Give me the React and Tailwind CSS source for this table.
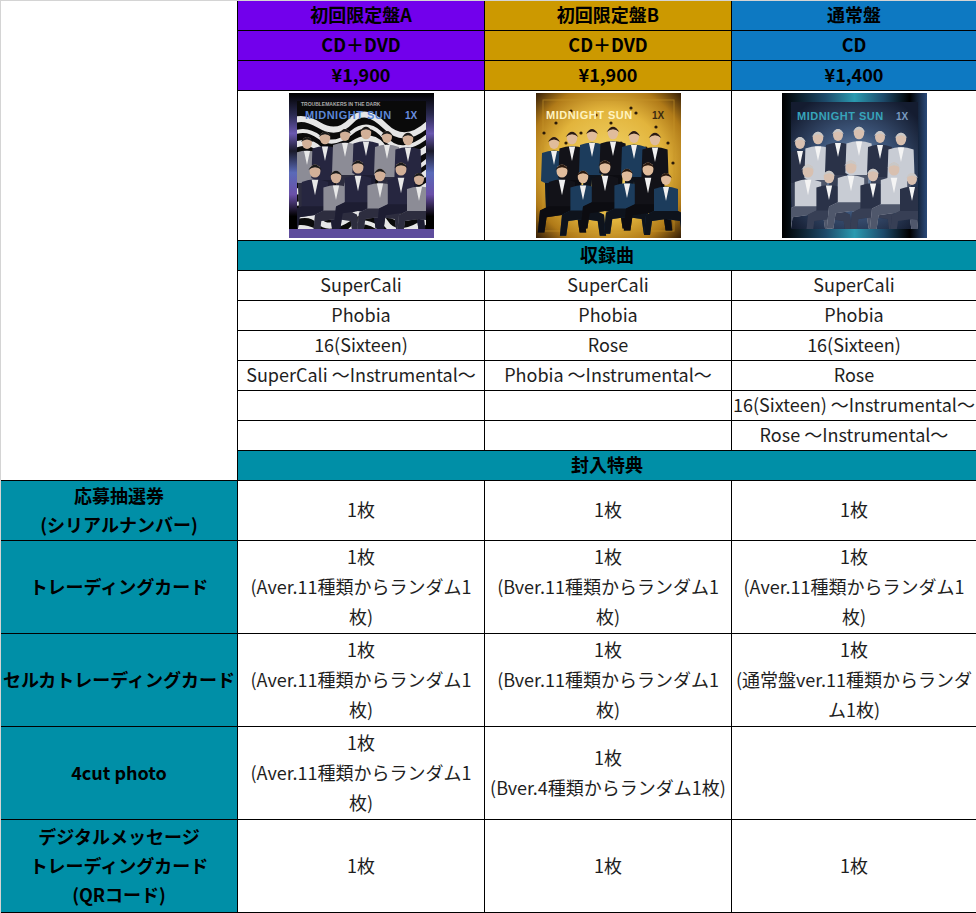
import React from "react";

const FONT = "font-['Noto_Sans_CJK_JP','Noto_Sans',sans-serif]";

function People({ cloth, cloth2, skin = "#d8b49c", hair = "#1a1a1a", shirt = "#e8e8e8", legs }) {
  const back = [
    [18, 50, 1.0], [36, 45, 1.05], [56, 42, 1.0], [77, 40, 1.05], [98, 44, 1.0], [119, 46, 1.05],
  ];
  const front = [
    [26, 78, 1.1], [47, 84, 1.05], [69, 74, 1.1], [91, 82, 1.05], [112, 76, 1.1], [130, 86, 1.0],
  ];
  const standing = (x, y, s, i, c) => (
    <g key={i} transform={`translate(${x} ${y}) scale(${s})`}>
      <path d="M-12 10 Q0 5 12 10 L13 38 L9 40 L8 66 L2 66 L0 44 L-2 66 L-8 66 L-9 40 L-13 38 Z" fill={c} />
      <path d="M-9 40 L9 40 L8 66 L2 66 L0 44 L-2 66 L-8 66 Z" fill={legs || c} opacity="0.85" />
      <path d="M-3 8 L3 8 L0 22 Z" fill={shirt} />
      <ellipse cx="0" cy="0" rx="5" ry="6" fill={skin} />
      <path d="M-6 -1 Q0 -11 6 -1 Q0 -6 -6 -1 Z" fill={hair} />
    </g>
  );
  const sitting = (x, y, s, i, c) => (
    <g key={i} transform={`translate(${x} ${y}) scale(${s})`}>
      <path d="M-12 10 Q0 5 12 10 L12 32 L20 36 L22 56 L16 56 L14 42 L0 40 L-14 42 L-16 56 L-22 56 L-20 36 L-12 32 Z" fill={c} />
      <path d="M-12 32 L12 32 L20 36 L22 56 L16 56 L14 42 L0 40 L-14 42 L-16 56 L-22 56 L-20 36 Z" fill={legs || c} opacity="0.85" />
      <path d="M-3 8 L3 8 L0 22 Z" fill={shirt} />
      <ellipse cx="0" cy="0" rx="5" ry="6" fill={skin} />
      <path d="M-6 -1 Q0 -11 6 -1 Q0 -6 -6 -1 Z" fill={hair} />
    </g>
  );
  return (
    <g>
      {back.map(([x, y, s], i) => standing(x, y, s, "b" + i, i % 2 ? cloth : cloth2))}
      {front.map(([x, y, s], i) => sitting(x, y, s, "f" + i, i % 2 ? cloth2 : cloth))}
    </g>
  );
}

function CoverA() {
  return (
    <svg width="145" height="145" viewBox="0 0 145 145">
      <defs>
        <linearGradient id="aSide" x1="0" y1="0" x2="0" y2="1">
          <stop offset="0" stopColor="#000" />
          <stop offset="0.15" stopColor="#2a2a50" />
          <stop offset="0.28" stopColor="#6a58b0" />
          <stop offset="0.4" stopColor="#1a1a2a" />
          <stop offset="0.55" stopColor="#5a6ab8" />
          <stop offset="0.7" stopColor="#6a50a8" />
          <stop offset="0.85" stopColor="#000" />
          <stop offset="1" stopColor="#000" />
        </linearGradient>
        <clipPath id="aClip"><rect x="8" y="8" width="129" height="128" /></clipPath>
      </defs>
      <rect width="145" height="145" fill="url(#aSide)" />
      <rect x="0" y="136" width="145" height="9" fill="#5e4c9c" />
      <rect x="8" y="8" width="129" height="128" fill="#0a0a0a" />
      <g clipPath="url(#aClip)">
        {[30, 42, 54, 66, 78, 90, 102, 114, 126, 138].map((y, i) => (
          <path
            key={i}
            d={`M0 ${y} Q${12 + (i % 3) * 4} ${y - 9} 30 ${y + 2} T62 ${y - 2} T96 ${y + 3} T140 ${y}`}
            stroke="#e6e6e6"
            strokeWidth={i % 2 ? 4 : 6}
            fill="none"
          />
        ))}
        <People cloth="#262640" cloth2="#8c8c96" skin="#d2b098" legs="#1c1c30" />
      </g>
      <text x="12" y="13" fill="#aaa" fontSize="5" fontFamily="Liberation Sans, sans-serif" fontWeight="bold">TROUBLEMAKERS IN THE DARK</text>
      <text x="16" y="26" fill="#5b86d6" fontSize="11" fontFamily="Liberation Sans, sans-serif" fontWeight="bold" letterSpacing="0.5">MIDNIGHT SUN</text>
      <text x="116" y="26" fill="#6b8ee0" fontSize="10" fontFamily="Liberation Sans, sans-serif" fontWeight="bold">1X</text>
    </svg>
  );
}

function CoverB() {
  const dots = [
    [20, 30], [35, 18], [60, 22], [95, 15], [120, 34], [132, 50], [15, 60], [110, 55], [75, 30], [45, 40], [128, 100], [14, 110], [100, 20], [85, 50], [30, 50], [8, 40], [137, 70],
  ];
  return (
    <svg width="145" height="145" viewBox="0 0 145 145">
      <defs>
        <radialGradient id="bBg" cx="0.5" cy="0.5" r="0.7">
          <stop offset="0" stopColor="#f4d86e" />
          <stop offset="0.55" stopColor="#e2b43c" />
          <stop offset="0.8" stopColor="#b07a18" />
          <stop offset="1" stopColor="#3a2208" />
        </radialGradient>
        <clipPath id="bClip"><rect width="145" height="145" /></clipPath>
      </defs>
      <rect width="145" height="145" fill="url(#bBg)" />
      <rect x="7" y="7" width="131" height="131" fill="none" stroke="#c8962a" strokeWidth="1" opacity="0.6" />
      {dots.map(([x, y], i) => (
        <circle key={i} cx={x} cy={y} r="1.6" fill="#2a1a08" />
      ))}
      <g clipPath="url(#bClip)">
        <People cloth="#121218" cloth2="#1c3c5c" skin="#e0bc9c" hair="#2a1a10" shirt="#f0f0f0" legs="#0c0c10" />
      </g>
      <text x="10" y="26" fill="#fff3c0" fontSize="11" fontFamily="Liberation Sans, sans-serif" fontWeight="bold" letterSpacing="0.5">MIDNIGHT SUN</text>
      <text x="116" y="26" fill="#3a2a10" fontSize="10" fontFamily="Liberation Sans, sans-serif" fontWeight="bold">1X</text>
    </svg>
  );
}

function CoverC() {
  return (
    <svg width="145" height="145" viewBox="0 0 145 145">
      <defs>
        <linearGradient id="cTop" x1="0" y1="0" x2="1" y2="0">
          <stop offset="0" stopColor="#000" />
          <stop offset="0.3" stopColor="#1d4a6a" />
          <stop offset="0.5" stopColor="#2a9ab0" />
          <stop offset="0.7" stopColor="#1d4a6a" />
          <stop offset="0.88" stopColor="#000" />
          <stop offset="1" stopColor="#2a4a7a" />
        </linearGradient>
        <radialGradient id="cBg" cx="0.5" cy="0.55" r="0.65">
          <stop offset="0" stopColor="#8aa4c4" />
          <stop offset="0.5" stopColor="#3c5478" />
          <stop offset="1" stopColor="#141c30" />
        </radialGradient>
        <clipPath id="cClip"><rect x="9" y="9" width="127" height="127" /></clipPath>
      </defs>
      <rect width="145" height="145" fill="url(#cTop)" />
      <rect x="9" y="9" width="127" height="127" fill="url(#cBg)" />
      <g clipPath="url(#cClip)">
        <People cloth="#c8ccd4" cloth2="#2a3248" skin="#d8c0b0" hair="#c8c8c8" shirt="#f4f4f4" legs="#3a4258" />
      </g>
      <text x="15" y="27" fill="#37a4ba" fontSize="11" fontFamily="Liberation Sans, sans-serif" fontWeight="bold" letterSpacing="0.5">MIDNIGHT SUN</text>
      <text x="114" y="27" fill="#7a9ac0" fontSize="10" fontFamily="Liberation Sans, sans-serif" fontWeight="bold">1X</text>
    </svg>
  );
}

const base = "flex items-center justify-center text-center whitespace-nowrap border-b border-black pb-[2px]";

function Cell({ children, last, className = "" }) {
  return <div className={`${base} ${last ? "" : "border-r"} ${className}`}>{children}</div>;
}

function Lines({ text, leading = "leading-[30px]" }) {
  const parts = text.split("\n");
  return (
    <div className={leading}>
      {parts.map((p, i) => (
        <div key={i}>{p}</div>
      ))}
    </div>
  );
}

const headers = [
  { bg: "bg-[#7200ec]", rows: ["初回限定盤A", "CD＋DVD", "¥1,900"] },
  { bg: "bg-[#cc9900]", rows: ["初回限定盤B", "CD＋DVD", "¥1,900"] },
  { bg: "bg-[#0d79c2]", rows: ["通常盤", "CD", "¥1,400"] },
];

const songs = [
  ["SuperCali", "SuperCali", "SuperCali"],
  ["Phobia", "Phobia", "Phobia"],
  ["16(Sixteen)", "Rose", "16(Sixteen)"],
  ["SuperCali ～Instrumental～", "Phobia ～Instrumental～", "Rose"],
  ["", "", "16(Sixteen) ～Instrumental～"],
  ["", "", "Rose ～Instrumental～"],
];

const bonus = [
  {
    label: "応募抽選券\n(シリアルナンバー)",
    cells: ["1枚", "1枚", "1枚"],
  },
  {
    label: "トレーディングカード",
    cells: [
      "1枚\n(Aver.11種類からランダム1\n枚)",
      "1枚\n(Bver.11種類からランダム1\n枚)",
      "1枚\n(Aver.11種類からランダム1\n枚)",
    ],
  },
  {
    label: "セルカトレーディングカード",
    cells: [
      "1枚\n(Aver.11種類からランダム1\n枚)",
      "1枚\n(Bver.11種類からランダム1\n枚)",
      "1枚\n(通常盤ver.11種類からランダ\nム1枚)",
    ],
  },
  {
    label: "4cut photo",
    cells: ["1枚\n(Aver.11種類からランダム1\n枚)", "1枚\n(Bver.4種類からランダム1枚)", ""],
  },
  {
    label: "デジタルメッセージ\nトレーディングカード\n(QRコード)",
    cells: ["1枚", "1枚", "1枚"],
  },
];

export default function App() {
  return (
    <div className={`w-[976px] h-[913px] bg-white border-t border-l border-[#d4d4d4] ${FONT} text-[18px] text-[#1e1e1e]`}>
      <div className="grid grid-cols-[237px_247px_247px_244px] grid-rows-[30px_30px_30px_150px_30px_30px_30px_30px_30px_30px_30px_30px_60px_93px_93px_93px_93px]">
        <div className="row-span-12 bg-white border-r border-b border-black" />
        {[0, 1, 2].map((r) =>
          headers.map((h, c) => (
            <Cell key={`h${r}${c}`} last={c === 2} className={`${h.bg} font-bold text-black`}>
              {h.rows[r]}
            </Cell>
          ))
        )}
        <div className="flex justify-center items-start pt-[2px] border-r border-b border-black">
          <CoverA />
        </div>
        <div className="flex justify-center items-start pt-[2px] border-r border-b border-black">
          <CoverB />
        </div>
        <div className="flex justify-center items-start pt-[2px] border-b border-black">
          <CoverC />
        </div>
        <div className={`${base} col-span-3 bg-[#008fa7] font-bold text-black`}>収録曲</div>
        {songs.map((row, r) =>
          row.map((s, c) => (
            <Cell key={`s${r}${c}`} last={c === 2}>
              {s}
            </Cell>
          ))
        )}
        <div className={`${base} col-span-3 bg-[#008fa7] font-bold text-black`}>封入特典</div>
        {bonus.map((b, r) => (
          <React.Fragment key={`b${r}`}>
            <Cell className="bg-[#008fa7] font-bold text-black">
              <Lines text={b.label} leading="leading-[29px]" />
            </Cell>
            {b.cells.map((t, c) => (
              <Cell key={c} last={c === 2} className="pb-[3px]">
                <Lines text={t} />
              </Cell>
            ))}
          </React.Fragment>
        ))}
      </div>
    </div>
  );
}
